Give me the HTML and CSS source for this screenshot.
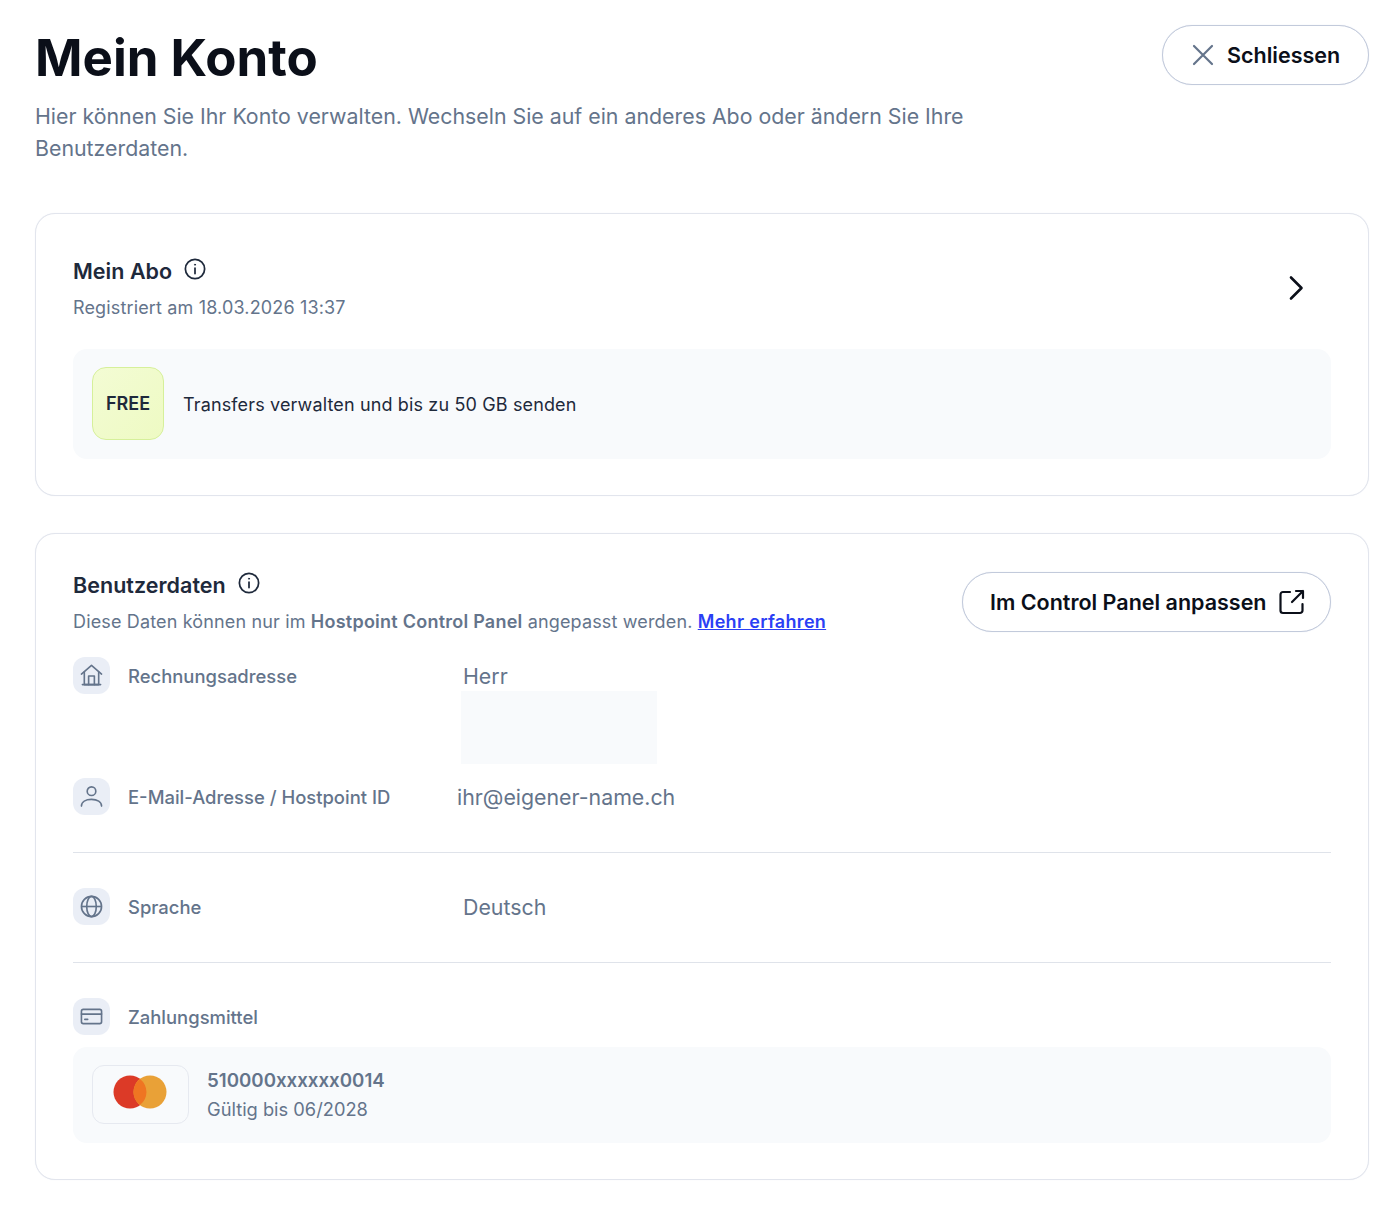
FILE: index.html
```html
<!DOCTYPE html>
<html lang="de">
<head>
<meta charset="utf-8">
<title>Mein Konto</title>
<link rel="stylesheet" href="styles.css">
</head>
<body>
<main class="page">
  <header class="page-head">
    <div class="page-intro">
      <h1 class="page-title">Mein Konto</h1>
      <p class="page-sub">Hier können Sie Ihr Konto verwalten. Wechseln Sie auf ein anderes Abo oder ändern Sie Ihre Benutzerdaten.</p>
    </div>
    <button class="pill pill-close" type="button">
      <svg class="ico-close" viewBox="0 0 24 24" fill="none" stroke="#64748b" stroke-width="2.200" stroke-linecap="round"><path d="M3 3l18 18M21 3L3 21"/></svg>
      <span>Schliessen</span>
    </button>
  </header>

  <section class="card card-abo">
    <div class="abo-head">
      <div>
        <div class="title-row">
          <h2 class="card-title">Mein Abo</h2>
          <svg class="ico-info" viewBox="0 0 24 24" fill="none" stroke="#1e293b" stroke-width="1.900" stroke-linecap="round"><circle cx="12" cy="12" r="10.500"/><path d="M12 11v6"/><circle cx="12" cy="7.300" r=".6" fill="#1e293b" stroke-width="1"/></svg>
        </div>
        <p class="card-sub">Registriert am 18.03.2026 13:37</p>
      </div>
      <svg class="ico-chevron" viewBox="0 0 16 26" fill="none" stroke="#0b0f19" stroke-width="2.600" stroke-linecap="round" stroke-linejoin="round"><path d="M3 2.500l10.500 10.500L3 23.500"/></svg>
    </div>
    <div class="panel panel-plan">
      <div class="badge">FREE</div>
      <span class="plan-text">Transfers verwalten und bis zu 50 GB senden</span>
    </div>
  </section>

  <section class="card card-user">
    <div class="user-head">
      <div>
        <div class="title-row">
          <h2 class="card-title">Benutzerdaten</h2>
          <svg class="ico-info" viewBox="0 0 24 24" fill="none" stroke="#1e293b" stroke-width="1.900" stroke-linecap="round"><circle cx="12" cy="12" r="10.500"/><path d="M12 11v6"/><circle cx="12" cy="7.300" r=".6" fill="#1e293b" stroke-width="1"/></svg>
        </div>
        <p class="card-sub">Diese Daten können nur im <strong>Hostpoint Control Panel</strong> angepasst werden. <a class="link" href="#">Mehr erfahren</a></p>
      </div>
      <button class="pill pill-panel" type="button">
        <span>Im Control Panel anpassen</span>
        <svg class="ico-ext" viewBox="0 0 26 26" fill="none" stroke="#0b0f19" stroke-width="2.200" stroke-linecap="round" stroke-linejoin="round"><path d="M11 3H4a2.500 2.500 0 0 0-2.500 2.500v16A2.500 2.500 0 0 0 4 24h17a2.500 2.500 0 0 0 2.500-2.500V15"/><path d="M13 13L24 2M17 2h7v7"/></svg>
      </button>
    </div>

    <div class="row row-address">
      <span class="icon-tile"><svg viewBox="0 0 24 24" fill="none" stroke="#64748b" stroke-width="1.700" stroke-linecap="round" stroke-linejoin="round"><path d="M1.500 10.500L12 1.500l10.500 9"/><path d="M4.500 8.500V21.500h15V8.500"/><path d="M9 21.500v-9h6v9"/><path d="M2.500 21.500h19"/></svg></span>
      <span class="row-label">Rechnungsadresse</span>
      <div class="row-value">
        <div class="value-inset">Herr</div>
        <div class="redacted"></div>
      </div>
    </div>

    <div class="row row-email">
      <span class="icon-tile"><svg viewBox="0 0 24 24" fill="none" stroke="#64748b" stroke-width="1.700" stroke-linecap="round"><circle cx="12" cy="6.500" r="4.500"/><path d="M1.500 22c0-4.500 4.500-7 10.500-7s10.500 2.500 10.500 7"/></svg></span>
      <span class="row-label">E-Mail-Adresse / Hostpoint ID</span>
      <div class="row-value">ihr@eigener-name.ch</div>
    </div>

    <hr class="rule">

    <div class="row">
      <span class="icon-tile"><svg viewBox="0 0 24 24" fill="none" stroke="#64748b" stroke-width="1.700"><circle cx="12" cy="12" r="10.500"/><path d="M1.500 12h21"/><ellipse cx="12" cy="12" rx="5" ry="10.500"/></svg></span>
      <span class="row-label">Sprache</span>
      <div class="row-value value-inset">Deutsch</div>
    </div>

    <hr class="rule">

    <div class="row">
      <span class="icon-tile"><svg viewBox="0 0 24 24" fill="none" stroke="#64748b" stroke-width="1.700" stroke-linecap="round" stroke-linejoin="round"><rect x="1.500" y="4.500" width="21" height="15" rx="2"/><path d="M1.500 9.500h21"/><path d="M5 15h3"/></svg></span>
      <span class="row-label">Zahlungsmittel</span>
    </div>

    <div class="panel panel-pay">
      <div class="card-logo">
        <svg class="mc" viewBox="0 0 54 34"><circle cx="17" cy="17" r="16.500" fill="#dc3a27"/><circle cx="37" cy="17" r="16.500" fill="#e9a137"/><path d="M27 3.900a16.500 16.500 0 0 1 0 26.200a16.500 16.500 0 0 1 0-26.200z" fill="#ef7522"/></svg>
      </div>
      <div class="pay-text">
        <div class="pay-number">510000xxxxxx0014</div>
        <div class="pay-valid">Gültig bis 06/2028</div>
      </div>
    </div>
  </section>
</main>
</body>
</html>
```
FILE: styles.css
```css
* { box-sizing: border-box; }
html, body { margin: 0; background: #fff; }
body { font-family: Inter, "Liberation Sans", sans-serif; color: #64748b; }
.page { padding: 25px 31px 32px 35px; }

.page-head { display: flex; justify-content: space-between; align-items: flex-start; }
.page-intro { width: 960px; }
.page-title { margin: 1px 0 11px; font-size: 51px; line-height: 64px; font-weight: 650; color: #0b0f19; }
.page-sub { margin: -1px 0 1px; font-size: 21.330px; line-height: 32px; color: #64748b; }

.pill { display: inline-flex; align-items: center; height: 60px; border: 1px solid #c2cadb; border-radius: 30px; background: #fff; box-shadow: 0 0 1px #d5dbe8; font-family: inherit; font-size: 21.500px; font-weight: 600; color: #0b0f19; padding: 0; }
.pill-close { width: 207px; padding-left: 28px; gap: 12px; }
.pill-panel { width: 369px; padding-left: 27px; gap: 12px; flex: none; margin-top: 1px; }
.ico-close { width: 24px; height: 24px; }
.ico-ext { width: 26px; height: 26px; margin-top: -1px; }

.card { border: 1px solid #e2e5ed; border-radius: 20px; padding: 37px 37px 36px; background: #fff; box-shadow: 0 0 1px #e6e9f0; }
.card-abo { margin-top: 48px; }
.card-user { margin-top: 37px; }

.abo-head { display: flex; justify-content: space-between; align-items: center; padding-top: 6px; }
.ico-chevron { width: 16px; height: 26px; margin-right: 27px; margin-bottom: -2px; margin-top: -6px; }
.user-head { display: flex; justify-content: space-between; align-items: flex-start; }

.title-row { display: flex; align-items: center; gap: 12px; }
.card-title { margin: 0; font-size: 21.500px; line-height: 28px; font-weight: 600; letter-spacing: .03px; color: #1e293b; }
.ico-info { width: 22px; height: 22px; margin-bottom: 4px; }
.card-sub { margin: 9px 0 0; font-size: 18px; line-height: 28px; letter-spacing: .15px; color: #64748b; }
.card-sub strong { font-weight: 600; letter-spacing: .24px; }
.link { color: #2b3ff5; font-weight: 600; letter-spacing: .3px; text-decoration: underline; }

.panel { display: flex; align-items: center; background: #f8fafc; border-radius: 14px; padding: 0 19px; }
.panel-plan { height: 110px; margin-top: 27px; gap: 19px; }
.badge { width: 72px; height: 73px; flex: none; margin-bottom: 1px; display: flex; align-items: center; justify-content: center; border: 1px solid #d6f09a; border-radius: 14px; background: linear-gradient(135deg, #f3fcd4, #eefac3); font-size: 18px; font-weight: 600; color: #1e293b; }
.plan-text { font-size: 18px; color: #1e293b; letter-spacing: .14px; }

.row { display: grid; grid-template-columns: 36px 311px 1fr; column-gap: 19px; align-items: start; }
.row-address { margin-top: 22px; margin-bottom: 15px; }
.icon-tile { width: 37px; height: 37px; margin: -1px 0 1px; border-radius: 12px; background: #eaeef6; display: flex; align-items: center; justify-content: center; }
.icon-tile svg { width: 23px; height: 23px; }
.row-label { font-size: 18.450px; line-height: 36px; font-weight: 550; color: #64748b; }
.row-value { font-size: 21.330px; line-height: 36px; color: #64748b; margin-left: -1px; }
.value-inset { padding-left: 6px; }
.redacted { width: 196px; height: 73px; margin-left: 4px; margin-top: -3px; background: #f8fafc; }

.rule { border: 0; height: 1px; background: #dfe3ea; margin: 36px 0; }

.panel-pay { height: 96px; margin-top: 11px; gap: 18px; }
.card-logo { width: 97px; height: 59px; flex: none; margin-bottom: 2px; padding: 0 2px 5px 0; border: 1px solid #e6e9f0; border-radius: 12px; display: flex; align-items: center; justify-content: center; }
.mc { width: 54px; height: 34px; }
.pay-number { font-size: 18.700px; line-height: 28px; font-weight: 600; color: #64748b; }
.pay-valid { font-size: 18.300px; line-height: 28px; color: #64748b; }
```
